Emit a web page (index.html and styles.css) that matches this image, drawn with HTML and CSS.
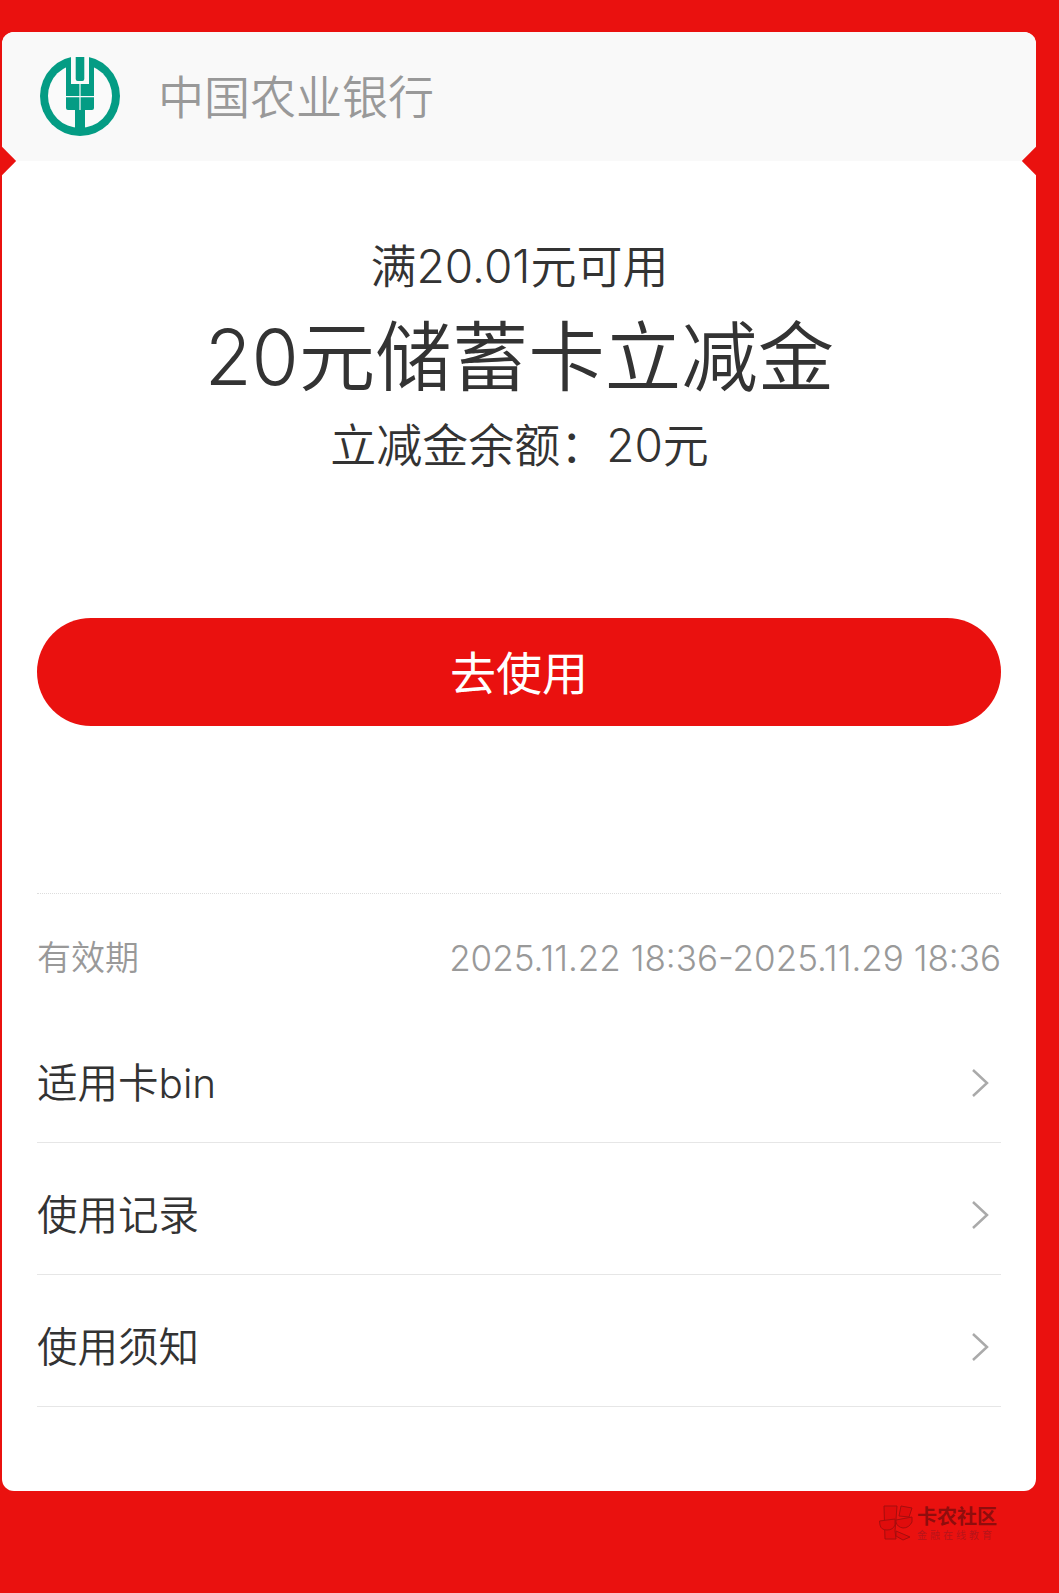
FILE: index.html
```html
<!DOCTYPE html>
<html lang="zh-CN">
  <head>
    <meta charset="UTF-8" />
    <title>20元储蓄卡立减金</title>
    <link rel="stylesheet" href="styles.css">
  </head>
  <body>
    <div class="card">
      <div class="card-head">
        <svg class="logo" viewBox="0 0 80 80" width="80" height="80">
          <circle cx="40" cy="40" r="40" fill="#049c84" />
          <circle cx="40" cy="40" r="32" fill="#fafafa" />
          <path d="M26 3h28v49a2 2 0 0 1-2 2h-7v25H35V54h-7a2 2 0 0 1-2-2z" fill="#049c84" />
          <path d="M31 0h18v28H31z" fill="#fafafa" />
          <path d="M35.7 1h8.6v22a2 2 0 0 1-2 2h-4.600a2 2 0 0 1-2-2z" fill="#049c84" />
          <path d="M26 40h28v1.200H26zM39.400 28h1.200v26h-1.200z" fill="#fafafa" />
        </svg>
        <span class="bank-name">中国农业银行</span>
      </div>
      <span class="notch notch-left"></span>
      <span class="notch notch-right"></span>

      <div class="summary">
        <div class="limit">满20.01元可用</div>
        <div class="title">20元储蓄卡立减金</div>
        <div class="balance">立减金余额：20元</div>
      </div>

      <button class="use-btn" type="button">去使用</button>

      <div class="details">
        <div class="valid">
          <span>有效期</span>
          <span class="valid-range">2025.11.22 18:36-2025.11.29 18:36</span>
        </div>
        <div class="row">
          <span>适用卡bin</span>
          <svg class="arrow" viewBox="0 0 18 30" width="18" height="30"><path d="M2 2l14 13L2 28" /></svg>
        </div>
        <div class="row">
          <span>使用记录</span>
          <svg class="arrow" viewBox="0 0 18 30" width="18" height="30"><path d="M2 2l14 13L2 28" /></svg>
        </div>
        <div class="row">
          <span>使用须知</span>
          <svg class="arrow" viewBox="0 0 18 30" width="18" height="30"><path d="M2 2l14 13L2 28" /></svg>
        </div>
      </div>
    </div>

    <div class="watermark">
      <svg class="wm-icon" viewBox="0 0 34 36" width="34" height="36">
        <path d="M5 1h13l-1 13-1 12 1 8H6z" fill="#e00c0c" stroke="#a50e0e" />
        <path d="M22 1l11 2-3 9-10-1z" fill="#e00c0c" stroke="#a50e0e" />
        <path d="M17 26l14 6-7 3-7-4z" fill="#e00c0c" stroke="#a50e0e" />
        <path d="M0.500 16L16 14v6q-2 5-8 5-6 0-7-5zM17 15l16-3v5q-3 6-9 6-6-1-7-6z" fill="#e00c0c" stroke="#a50e0e" />
      </svg>
      <div class="wm-text">
        <div class="wm-name">卡农社区</div>
        <div class="wm-sub">金融在线教育</div>
      </div>
    </div>
  </body>
</html>
```

FILE: styles.css
```css
body {
  margin: 0;
  height: 1593px;
  overflow: hidden;
  background-color: #ea110f;
  font-family: Inter, "Noto Sans CJK SC", sans-serif;
  font-weight: 350;
  color: #333;
  padding-top: 32px;
  box-sizing: border-box;
}
.card {
  position: relative;
  width: 1034px;
  height: 1459px;
  margin-left: 2px;
  background-color: #fff;
  border-radius: 12px;
  overflow: hidden;
}
.card-head {
  height: 129px;
  background-color: #f9f9f9;
  display: flex;
  align-items: center;
  padding-left: 38px;
  box-sizing: border-box;
}
.logo {
  flex: none;
  margin-top: -1px;
}
.bank-name {
  margin-left: 38px;
  font-size: 46px;
  line-height: 60px;
  color: #999;
}
.notch {
  position: absolute;
  top: 119px;
  width: 20px;
  height: 20px;
  background-color: #ea110f;
  transform: rotate(45deg);
}
.notch-left {
  left: -10px;
}
.notch-right {
  right: -10px;
}
.summary {
  text-align: center;
  padding-top: 73px;
  margin-left: 1px;
}
.limit {
  font-size: 46px;
  line-height: 64px;
}
.title {
  font-size: 76.5px;
  line-height: 104px;
  margin-top: 7px;
}
.balance {
  font-size: 46px;
  line-height: 64px;
  margin-top: 4px;
}
.use-btn {
  display: block;
  width: 964px;
  height: 108px;
  margin: 141px auto 0;
  padding: 0 0 5px;
  border: none;
  border-radius: 54px;
  background-color: #ea110f;
  color: #fff;
  font-family: inherit;
  font-weight: 400;
  font-size: 46px;
}
.details {
  margin: 167px 35px 0;
  border-top: 1px dotted #ddd;
}
.valid {
  display: flex;
  justify-content: space-between;
  align-items: center;
  height: 117px;
  padding-top: 6px;
  box-sizing: border-box;
  font-size: 34px;
  color: #999;
}
.valid-range {
  margin-top: 4px;
  font-size: 35px;
}
.row {
  display: flex;
  justify-content: space-between;
  align-items: center;
  height: 132px;
  padding-top: 7px;
  font-size: 40.5px;
  border-bottom: 1px solid #e6e6e6;
  box-sizing: border-box;
}
.arrow {
  margin: 5px 12px 0 0;
  fill: none;
  stroke: #aaa;
  stroke-width: 2.5;
}
.watermark {
  position: absolute;
  left: 879px;
  top: 1505px;
  display: flex;
  align-items: center;
  gap: 4px;
}
.wm-name {
  margin-top: 2px;
  font-size: 20px;
  line-height: 20px;
  font-weight: 700;
  color: #8f0d0d;
}
.wm-sub {
  margin-top: 2px;
  font-size: 10px;
  line-height: 12px;
  letter-spacing: 3px;
  font-weight: 400;
  color: #b8141a;
}
```
